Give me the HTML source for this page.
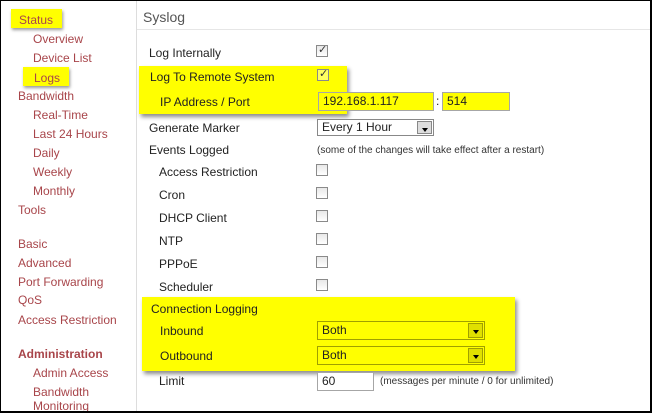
<!DOCTYPE html>
<html><head><meta charset="utf-8"><style>
*{margin:0;padding:0;box-sizing:border-box}
body{width:652px;height:413px;background:#fff;font-family:"Liberation Sans",Arial,sans-serif;font-size:12px;color:#222;position:relative;overflow:hidden}
.frame{position:absolute;left:0;top:0;width:652px;height:413px;border:1px solid #000;border-right:2px solid #000;border-bottom:2px solid #000;z-index:10;pointer-events:none}
.t{position:absolute;white-space:nowrap;line-height:14px}
.l{color:#a8454a}
.hl{position:absolute;background:#ffff00;box-shadow:2px 3px 4px rgba(0,0,0,.45)}
.cb{position:absolute;width:12px;height:12px;border:1px solid #8a8a8a;background:linear-gradient(#e8e8e8,#fff)}
.cb.c::after{content:"\2713";position:absolute;left:1px;top:-3px;font-size:11px;color:#333;font-family:"DejaVu Sans",sans-serif}
.in{position:absolute;border:1px solid #a6a6a6;background:#fff;padding-left:4px;line-height:16px;font-size:12px}
.sel{position:absolute;border:1px solid #888;background:#fff;padding-left:4px;line-height:15px}
.ar{position:absolute;right:1px;top:1px;bottom:1px;width:15px;border:1px solid #888;background:#ddd}
.ar::after{content:"";position:absolute;left:4px;top:6px;border-left:3px solid transparent;border-right:3px solid transparent;border-top:4px solid #000}
.n{position:absolute;font-size:10px;white-space:nowrap;color:#333}
</style></head><body>
<div class="frame"></div>
<div style="position:absolute;left:136px;top:0;width:1px;height:413px;background:#ddd"></div>
<div style="position:absolute;left:137px;top:29px;width:513px;height:1px;background:#e6e6e6"></div>

<div class="hl" style="left:11px;top:9px;width:51px;height:19px;box-shadow:1px 2px 3px rgba(0,0,0,.4)"></div>
<div class="hl" style="left:23px;top:67px;width:46px;height:19px;box-shadow:1px 2px 3px rgba(0,0,0,.4)"></div>
<div class="t l" style="left:19px;top:13px">Status</div>
<div class="t l" style="left:33px;top:32px">Overview</div>
<div class="t l" style="left:33px;top:51px">Device List</div>
<div class="t l" style="left:34px;top:71px">Logs</div>
<div class="t l" style="left:18px;top:89px">Bandwidth</div>
<div class="t l" style="left:33px;top:108px">Real-Time</div>
<div class="t l" style="left:33px;top:127px">Last 24 Hours</div>
<div class="t l" style="left:33px;top:146px">Daily</div>
<div class="t l" style="left:33px;top:165px">Weekly</div>
<div class="t l" style="left:33px;top:184px">Monthly</div>
<div class="t l" style="left:18px;top:203px">Tools</div>
<div class="t l" style="left:18px;top:237px">Basic</div>
<div class="t l" style="left:18px;top:256px">Advanced</div>
<div class="t l" style="left:18px;top:275px">Port Forwarding</div>
<div class="t l" style="left:18px;top:293px">QoS</div>
<div class="t l" style="left:18px;top:313px">Access Restriction</div>
<div class="t l" style="left:18px;top:347px;font-weight:bold">Administration</div>
<div class="t l" style="left:33px;top:366px">Admin Access</div>
<div class="t l" style="left:33px;top:385px">Bandwidth</div>
<div class="t l" style="left:33px;top:399px">Monitoring</div>

<div class="t" style="left:143px;top:9px;font-size:14px;color:#555;line-height:16px">Syslog</div>

<div class="t" style="left:149px;top:46px">Log Internally</div>
<div class="cb c" style="left:316px;top:45px"></div>

<div class="hl" style="left:139px;top:66px;width:208px;height:48px"></div>
<div class="t" style="left:150px;top:70px">Log To Remote System</div>
<div class="cb c" style="left:317px;top:69px;background:#ffff60"></div>
<div class="t" style="left:160px;top:95px">IP Address / Port</div>
<div class="in" style="left:318px;top:92px;width:116px;height:19px;background:#ffff00">192.168.1.117</div>
<div class="t" style="left:436px;top:94px">:</div>
<div class="in" style="left:442px;top:92px;width:68px;height:19px;background:#ffff00">514</div>

<div class="t" style="left:149px;top:121px">Generate Marker</div>
<div class="sel" style="left:317px;top:119px;width:117px;height:17px">Every 1 Hour<div class="ar"></div></div>

<div class="t" style="left:149px;top:143px">Events Logged</div>
<div class="n" style="left:317px;top:145px">(some of the changes will take effect after a restart)</div>

<div class="t" style="left:159px;top:165px">Access Restriction</div><div class="cb" style="left:316px;top:164px"></div>
<div class="t" style="left:159px;top:188px">Cron</div><div class="cb" style="left:316px;top:187px"></div>
<div class="t" style="left:159px;top:211px">DHCP Client</div><div class="cb" style="left:316px;top:210px"></div>
<div class="t" style="left:159px;top:234px">NTP</div><div class="cb" style="left:316px;top:233px"></div>
<div class="t" style="left:159px;top:257px">PPPoE</div><div class="cb" style="left:316px;top:256px"></div>
<div class="t" style="left:159px;top:280px">Scheduler</div><div class="cb" style="left:316px;top:279px"></div>

<div class="hl" style="left:142px;top:297px;width:373px;height:74px"></div>
<div class="t" style="left:151px;top:302px">Connection Logging</div>
<div class="t" style="left:160px;top:324px">Inbound</div>
<div class="sel" style="left:317px;top:321px;width:168px;height:19px;background:#ffff00;border-color:#a0a000;line-height:17px">Both<div class="ar" style="background:#e0e000;border-color:#a0a000"></div></div>
<div class="t" style="left:160px;top:349px">Outbound</div>
<div class="sel" style="left:317px;top:346px;width:168px;height:19px;background:#ffff00;border-color:#a0a000;line-height:17px">Both<div class="ar" style="background:#e0e000;border-color:#a0a000"></div></div>

<div class="t" style="left:159px;top:374px">Limit</div>
<div class="in" style="left:317px;top:372px;width:57px;height:19px">60</div>
<div class="n" style="left:380px;top:376px">(messages per minute / 0 for unlimited)</div>
</body></html>
